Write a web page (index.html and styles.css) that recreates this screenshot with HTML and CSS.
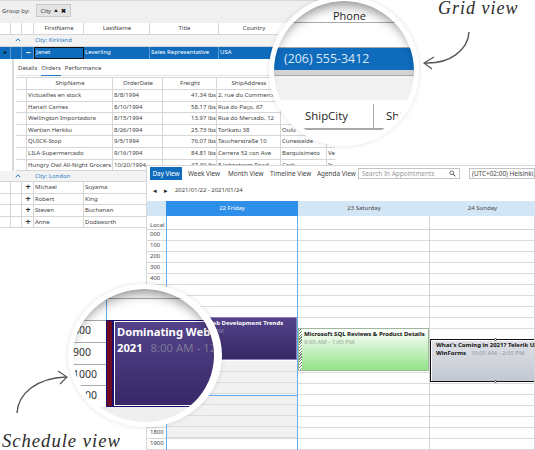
FILE: index.html
```html
<!DOCTYPE html>
<html lang="en">
<head>
    <meta charset="UTF-8">
    <title>Grid view and Schedule view</title>
    <link rel="stylesheet" href="styles.css">
</head>
<body>
<div class="canvas">

    <!-- grid window -->
    <div class="grid-window">
        <div class="group-bar">
            <span>Group by:</span>
            <span class="chip">City <i class="chip-up"></i> <b>✖</b></span>
        </div>
        <div class="row g-cols head">
            <div></div><div></div><div></div><div>FirstName</div><div>LastName</div><div>Title</div><div>Country</div><div></div>
        </div>
        <div class="group-row"><svg class="chev" viewBox="0 0 8 5"><path d="M1 4 4 1l3 3" fill="none" stroke="#1f6fb8" stroke-width="1.3"/></svg>City: Kirkland</div>
        <div class="row g-cols selected">
            <div class="play">▸</div><div></div><div class="toggle">−</div><div class="current">Janet</div><div>Leverling</div><div>Sales Representative</div><div>USA</div><div></div>
        </div>
        <div class="detail">
            <div class="tabs">
                <span>Details</span><span class="tab-on">Orders</span><span>Performance</span>
            </div>
            <div class="orders">
                <div class="row o-cols head"><div></div><div>ShipName</div><div>OrderDate</div><div>Freight</div><div>ShipAddress</div><div></div><div></div></div>
                <div class="row o-cols"><div></div><div>Victuailles en stock</div><div>8/8/1994</div><div class="num">41.34 lbs</div><div>2, rue du Commerce</div><div></div><div></div></div>
                <div class="row o-cols"><div></div><div>Hanari Carnes</div><div>8/10/1994</div><div class="num">58.17 lbs</div><div>Rua do Paço, 67</div><div></div><div></div></div>
                <div class="row o-cols"><div></div><div>Wellington Importadora</div><div>8/15/1994</div><div class="num">13.97 lbs</div><div>Rua do Mercado, 12</div><div></div><div></div></div>
                <div class="row o-cols"><div></div><div>Wartian Herkku</div><div>8/26/1994</div><div class="num">25.73 lbs</div><div>Torikatu 38</div><div>Oulu</div><div></div></div>
                <div class="row o-cols"><div></div><div>QUICK-Stop</div><div>9/5/1994</div><div class="num">76.07 lbs</div><div>Taucherstraße 10</div><div>Cunewalde</div><div></div></div>
                <div class="row o-cols"><div></div><div>LILA-Supermercado</div><div>9/16/1994</div><div class="num">84.81 lbs</div><div>Carrera 52 con Ave</div><div>Barquisimeto</div><div>Ve</div></div>
                <div class="row o-cols"><div></div><div>Hungry Owl All-Night Grocers</div><div>10/20/1994</div><div class="num">47.30 lbs</div><div>8 Johnstown Road</div><div>Cork</div><div>Ir</div></div>
            </div>
        </div>
        <div class="group-row"><svg class="chev" viewBox="0 0 8 5"><path d="M1 4 4 1l3 3" fill="none" stroke="#1f6fb8" stroke-width="1.3"/></svg>City: London</div>
        <div class="row g-cols"><div></div><div></div><div class="toggle">+</div><div>Michael</div><div>Suyama</div><div></div><div></div><div></div></div>
        <div class="row g-cols"><div></div><div></div><div class="toggle">+</div><div>Robert</div><div>King</div><div></div><div></div><div></div></div>
        <div class="row g-cols"><div></div><div></div><div class="toggle">+</div><div>Steven</div><div>Buchanan</div><div></div><div></div><div></div></div>
        <div class="row g-cols"><div></div><div></div><div class="toggle">+</div><div>Anne</div><div>Dodsworth</div><div></div><div></div><div></div></div>
    </div>

    <!-- scheduler window -->
    <div class="sched">
        <div class="sched-bar">
            <span class="view view-on">Day View</span>
            <span class="view">Week View</span>
            <span class="view">Month View</span>
            <span class="view">Timeline View</span>
            <span class="view">Agenda View</span>
            <span class="search">Search In Appointments
                <svg viewBox="0 0 10 10"><circle cx="4" cy="4" r="2.7" fill="none" stroke="#333"/><path d="M6 6l3 3" stroke="#333" stroke-width="1.4"/></svg>
            </span>
            <span class="zone">(UTC+02:00) Helsinki, Kyiv</span>
        </div>
        <div class="sched-nav">
            <span class="arrow">◂</span><span class="arrow">▸</span><span>2021/01/22 - 2021/01/24</span>
        </div>
        <div class="day-head">
            <div class="corner"></div>
            <div class="day day-on">22 Friday</div>
            <div class="day">23 Saturday</div>
            <div class="day">24 Sunday</div>
        </div>
        <div class="all-day">
            <div class="local">Local</div>
            <div class="cell cell-on"></div>
            <div class="cell"></div>
            <div class="cell"></div>
        </div>
        <div class="sched-body">
            <div class="times">
                <div>000</div><div>100</div><div>200</div><div>300</div><div>400</div>
                <div>500</div><div>600</div><div>700</div><div>800</div><div>900</div>
                <div>1000</div><div>1100</div><div>1200</div><div>1300</div><div>1400</div>
                <div>1500</div><div>1600</div><div>1700</div><div>1800</div><div>1900</div>
            </div>
            <div class="col col-on">
                <div class="off"></div>
                <div class="now"></div>
                <div class="appt appt-purple">
                    <b>Dominating Web Development Trends</b>
                    <span>8:00 AM - 12:00 PM</span>
                </div>
            </div>
            <div class="col">
                <div class="appt appt-green">
                    <b>Microsoft SQL Reviews &amp; Product Details</b>
                    <span>9:00 AM - 1:00 PM</span>
                </div>
            </div>
            <div class="col">
                <div class="appt appt-grey">
                    <p><b>What's Coming in 2021? Telerik UI for WinForms</b> <span>10:00 AM - 2:00 PM</span></p>
                    <i class="handle handle-top"></i>
                    <i class="handle handle-bottom"></i>
                </div>
            </div>
        </div>
    </div>

    <!-- magnifier over the grid -->
    <div class="lens lens-grid">
        <div class="lg-phone">Phone</div>
        <div class="lg-gap"></div>
        <div class="lg-blue">(206) 555-3412</div>
        <div class="lg-band"></div>
        <div class="lg-gap2"></div>
        <div class="lg-head"><div>ShipCity</div><div>Shi</div></div>
    </div>

    <!-- magnifier over the scheduler -->
    <div class="lens lens-sched">
        <div class="ls-top"></div>
        <div class="ls-main">
            <div class="ls-times">
                <div>800</div><div>900</div><div>1000</div><div>1100</div>
            </div>
            <div class="ls-strip"></div>
            <div class="ls-appt">
                <b>Dominating Web<br>2021</b> <span>8:00 AM - 12:00 PM</span>
            </div>
        </div>
        <div class="ls-rest"></div>
    </div>

    <div class="note note-grid">Grid view</div>
    <svg class="arrow-grid" viewBox="0 0 60 45"><path d="M49 2C48 20 30 34 5 33" fill="none" stroke="#555" stroke-width="1.4"/><path d="M14 27 4 33l8 6" fill="none" stroke="#555" stroke-width="1.2"/></svg>

    <div class="note note-sched">Schedule view</div>
    <svg class="arrow-sched" viewBox="0 0 60 50"><path d="M3 47C4 28 22 12 52 11" fill="none" stroke="#555" stroke-width="1.4"/><path d="M44 5l9 6-7 7" fill="none" stroke="#555" stroke-width="1.2"/></svg>
</div>
</body>
</html>
```

FILE: styles.css
```css
* {
    box-sizing: border-box;
}
body {
    margin: 0;
    background: white;
    font-family: "Noto Sans", "Open Sans", sans-serif;
    font-size: 6px;
    color: #444;
}
.canvas {
    position: relative;
    width: 535px;
    height: 450px;
    overflow: hidden;
}

/* grid window */
.grid-window {
    position: absolute;
    left: 0;
    top: 0;
    width: 335px;
    background: white;
}
.group-bar {
    display: flex;
    align-items: center;
    gap: 5px;
    height: 23px;
    padding: 0 2px 3px;
    background: #f0f0f0;
    border-top: 1px solid #d8d8d8;
}
.chip {
    display: flex;
    align-items: center;
    gap: 3px;
    height: 13px;
    padding: 0 4px;
    margin-left: 1px;
    background: #e4e4e4;
    border: 1px solid #c9c9c9;
}
.chip b {
    color: #111;
    font-size: 6px;
}
.chip-up {
    width: 0;
    height: 0;
    border: 2px solid transparent;
    border-top: 0;
    border-bottom: 3px solid #333;
}
.row {
    display: grid;
    height: 11.6px;
    line-height: 10.6px;
    border-bottom: 1px solid #d6d6d6;
}
.row > div {
    padding-left: 1px;
    border-right: 1px solid #d6d6d6;
    white-space: nowrap;
    overflow: hidden;
}
.g-cols {
    grid-template-columns: 11px 11px 12px 50px 66px 69px 70px 46px;
}
.o-cols {
    grid-template-columns: 11px 86px 50px 54px 64px 46px 50px;
}
.head {
    height: 12px;
    text-align: center;
    color: #444;
}
.group-row {
    display: flex;
    align-items: center;
    height: 11.5px;
    padding-left: 15px;
    color: #2d7cc7;
    background: #f3f3f3;
    border-bottom: 1px solid #d6d6d6;
}
.chev {
    width: 6px;
    height: 4px;
    margin-right: 14px;
}
.selected {
    height: 12.5px;
    line-height: 11.5px;
    color: white;
    background: #0f6cbd;
    border-bottom: 0;
}
.selected > div {
    border-right-color: #5b9ad2;
}
.selected .current {
    border: 1px solid #111;
    line-height: 9.5px;
}
.play {
    color: #111;
    text-align: center;
}
.toggle {
    color: #333;
    font-size: 9px;
    font-weight: bold;
    text-align: center;
}
.selected .toggle {
    color: white;
}
.detail {
    height: 111.5px;
    margin-left: 12px;
    padding: 2px 0 0 3px;
    overflow: hidden;
    border-left: 2px solid #d8d8d8;
    background: white;
}
.tabs {
    display: flex;
    gap: 4px;
    height: 15px;
    padding: 2px 0 0 1px;
    border-bottom: 1px solid #e4e4e4;
    line-height: 10px;
    margin-bottom: 1px;
}
.tab-on {
    height: 13px;
    border-bottom: 1px solid #2a78c2;
}
.orders {
    margin-left: -1px;
    border-top: 1px solid #d6d6d6;
}
.num {
    text-align: right;
}

/* scheduler window */
.sched {
    position: absolute;
    left: 146px;
    top: 165px;
    width: 389px;
    height: 285px;
    background: white;
    border-left: 1px solid #d8d8d8;
    border-top: 1px solid #d8d8d8;
}
.sched-bar {
    display: grid;
    grid-template-columns: 38px 40px 42px 47px 41px 102px 1fr;
    align-items: center;
    height: 14px;
    padding-left: 3px;
    font-size: 6.4px;
}
.view {
    white-space: nowrap;
}
.view-on {
    width: 32px;
    height: 13px;
    line-height: 13px;
    text-align: center;
    color: white;
    background: #0f6cbd;
}
.search {
    display: flex;
    align-items: center;
    justify-content: space-between;
    height: 11px;
    padding: 0 3px;
    color: #999;
    white-space: nowrap;
    border: 1px solid #c4c4c4;
}
.search svg {
    width: 7px;
    height: 7px;
}
.zone {
    height: 11px;
    margin-left: 9px;
    padding-left: 2px;
    line-height: 9px;
    white-space: nowrap;
    overflow: hidden;
    border: 1px solid #c4c4c4;
}
.sched-nav {
    display: flex;
    align-items: center;
    gap: 4px;
    height: 21px;
    padding: 0 0 1px 6px;
    font-size: 5.9px;
}
.arrow {
    color: #222;
    font-size: 7px;
    width: 7px;
}
.day-head {
    display: grid;
    grid-template-columns: 19px 132px 132px 105px;
    height: 15px;
    line-height: 14px;
    text-align: center;
    background: #d3e6f6;
}
.day-on {
    color: white;
    background: #2e8fe8;
}
.all-day {
    display: grid;
    grid-template-columns: 19px 132px 132px 105px;
    height: 13.5px;
    border-bottom: 1px solid #d4d4d4;
}
.local {
    padding-left: 3px;
    line-height: 19px;
}
.cell {
    border-right: 1px solid #d4d4d4;
}
.cell-on {
    border-left: 1px solid #64aef0;
    border-right: 1px solid #64aef0;
}
.sched-body {
    display: grid;
    grid-template-columns: 19px 132px 132px 105px;
}
.times div {
    height: 11px;
    padding-left: 3px;
    line-height: 9px;
    border-bottom: 1px solid #d8d8d8;
}
.col {
    position: relative;
    height: 220px;
    background: repeating-linear-gradient(#fff 0 9.6px, #dcdcdc 9.6px 11px);
    border-right: 1px solid #d4d4d4;
}
.col-on {
    border-left: 1px solid #64aef0;
    border-right: 1px solid #64aef0;
}
.off {
    position: absolute;
    left: 0;
    right: 0;
    top: 131px;
    height: 77px;
    background: repeating-linear-gradient(#f1f1f1 0 9.6px, #dcdcdc 9.6px 11px);
}
.now {
    position: absolute;
    left: 0;
    right: 0;
    top: 165px;
    height: 1px;
    background: #64aef0;
}
.appt {
    position: absolute;
    left: 0;
    right: 0;
    height: 43px;
    padding: 1px 2px;
    line-height: 8px;
    white-space: nowrap;
}
.appt b {
    display: block;
}
.appt span {
    display: block;
}
.appt-purple {
    top: 87px;
    color: white;
    background: linear-gradient(#54438a, #372868);
    border: 1px solid #8c7fb5;
}
.appt-purple span {
    color: #8d84a8;
}
.appt-green {
    top: 98px;
    padding-left: 5px;
    color: #111;
    background: linear-gradient(#fff, #93e388);
    border: 1px solid #9db89a;
}
.appt-green span {
    color: #9aa59a;
}
.appt-green::before {
    content: "";
    position: absolute;
    left: 0;
    top: 0;
    bottom: 0;
    width: 3px;
    background: repeating-linear-gradient(135deg, #fff 0 1px, #6f8a6c 1px 2px);
}
.appt-grey {
    top: 109px;
    padding-left: 5px;
    color: #111;
    background: linear-gradient(#dfe1e6, #c2c7d1);
    border: 1px solid #111;
    border-right: 0;
    box-shadow: inset 1px 1px 0 white;
}
.appt-grey p {
    width: 125px;
    margin: 0;
    white-space: normal;
}
.appt-grey b,
.appt-grey span {
    display: inline;
}
.appt-grey span {
    color: #9298a3;
    margin-left: 3px;
}
.handle {
    position: absolute;
    left: 63px;
    width: 3px;
    height: 3px;
    background: white;
    border: 1px solid #333;
    border-radius: 50%;
}
.handle-top {
    top: -2px;
}
.handle-bottom {
    bottom: -2px;
}

/* magnifiers */
.lens {
    position: absolute;
    display: flex;
    flex-direction: column;
    overflow: hidden;
    background: white;
    border: 5px solid white;
    border-radius: 50%;
    box-shadow: 0 0 5px rgba(0, 0, 0, 0.12);
}
.lens::after {
    content: "";
    position: absolute;
    inset: 0;
    border-radius: 50%;
    box-shadow: inset 0 12px 12px -8px rgba(0, 0, 0, 0.45);
}
.lens-grid {
    left: 269px;
    top: -4px;
    width: 150px;
    height: 150px;
    font-family: "Open Sans", "Noto Sans", sans-serif;
    color: #222;
}
.lg-phone {
    height: 22px;
    padding: 7px 0 0 59px;
    font-size: 11px;
    line-height: 16px;
    border-bottom: 1px solid #a8a8a8;
}
.lg-gap {
    height: 25px;
    border-bottom: 1px solid #a8a8a8;
}
.lg-blue {
    flex: none;
    height: 22px;
    padding-left: 10px;
    font-size: 12.4px;
    line-height: 22px;
    color: #dbe9f6;
    background: #0f6cbd;
}
.lg-band {
    flex: none;
    height: 6px;
    background: #d4d4d4;
    border-bottom: 1px solid #a8a8a8;
}
.lg-gap2 {
    flex: none;
    height: 28px;
    background: linear-gradient(#f2f2f2, #f2f2f2 24px, white 24px);
}
.lg-head {
    display: grid;
    flex: none;
    grid-template-columns: 100px 40px;
    height: 26px;
    font-size: 11.4px;
    line-height: 24px;
    text-align: center;
    border-bottom: 2px solid #a8a8a8;
}
.lg-head div:first-child {
    padding-left: 6px;
    border-right: 1px solid #a8a8a8;
}
.lens-sched {
    left: 68px;
    top: 284px;
    width: 154px;
    height: 143px;
    border-width: 5px 8px 5px 5px;
}
.ls-top {
    flex: none;
    height: 30px;
    margin-top: 9px;
    margin-left: 33px;
    background: linear-gradient(#a8a8a8 1px, white 1px);
    border-left: 1px solid #64aef0;
}
.ls-main {
    display: flex;
    flex: none;
    height: 87px;
    margin-top: -8px;
}
.ls-times {
    flex: none;
    width: 33px;
}
.ls-times div {
    height: 21.75px;
    font-size: 10.5px;
    line-height: 16px;
    padding-top: 1px;
    color: #333;
    border-top: 1px solid #a8a8a8;
    white-space: nowrap;
}
.ls-strip {
    flex: none;
    width: 7px;
    background: #6e0a22;
    border: 1px solid #1a0f70;
}
.ls-appt {
    flex: none;
    width: 120px;
    padding: 3px 3px;
    font-size: 11.2px;
    line-height: 16px;
    color: white;
    white-space: nowrap;
    background: linear-gradient(#54438a, #372868);
    border: 1px solid #1a0f70;
    box-shadow: inset 0 0 0 1px white;
}
.ls-appt span {
    color: #7d7796;
    font-size: 11.4px;
    margin-left: 5px;
}
.ls-rest {
    flex: 1;
    background: #efefef;
}

/* hand written notes */
.note {
    position: absolute;
    font-family: "Liberation Serif", serif;
    font-style: italic;
    letter-spacing: 1px;
    color: #2c2c2c;
    white-space: nowrap;
}
.note-grid {
    left: 438px;
    top: -2px;
    font-size: 18px;
}
.note-sched {
    left: 2px;
    top: 430px;
    font-size: 18.6px;
}
.arrow-grid {
    position: absolute;
    left: 420px;
    top: 30px;
    width: 60px;
    height: 45px;
}
.arrow-sched {
    position: absolute;
    left: 14px;
    top: 366px;
    width: 60px;
    height: 50px;
}
```
